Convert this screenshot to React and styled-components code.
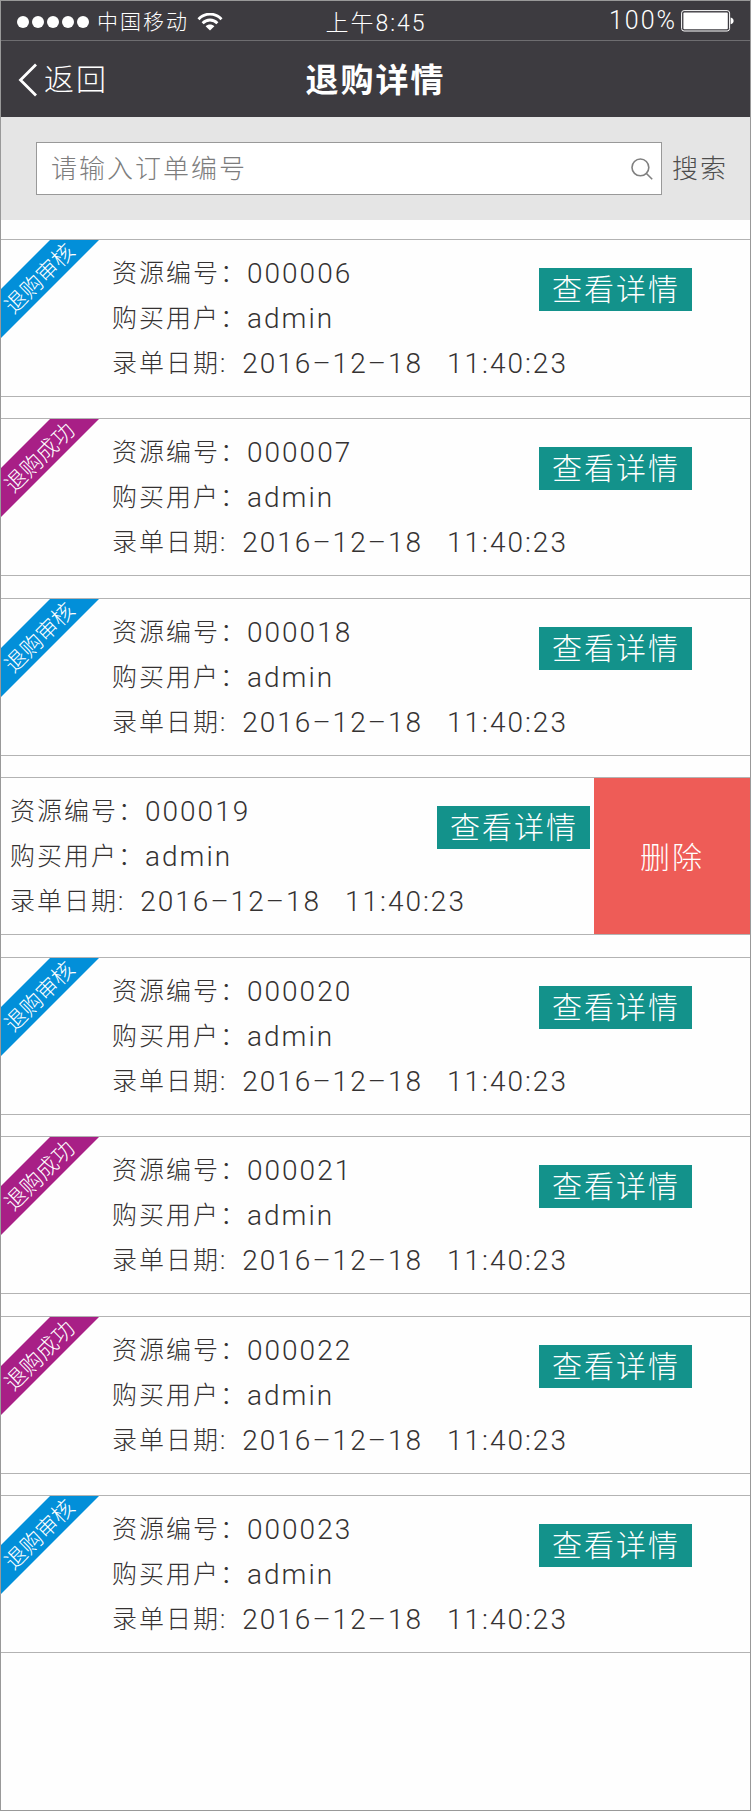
import React from "react";
import styled, { createGlobalStyle } from "styled-components";

const GlobalStyle = createGlobalStyle`
  *, *::before, *::after { box-sizing: border-box; }
  body {
    margin: 0;
    background: #fefefe;
    color: #353232;
    font-family: Roboto, "Noto Sans CJK SC", sans-serif;
    font-weight: 300;
    letter-spacing: 2px;
  }
  button, input { font: inherit; letter-spacing: inherit; }
`;

const Page = styled.div`
  display: flex;
  flex-direction: column;
  min-height: calc(100vh - 1px);
  margin-right: 1px;
  border: 1px solid #999;
`;

const StatusBar = styled.div`
  display: grid;
  grid-template-columns: 1fr auto 1fr;
  align-items: center;
  height: 40px;
  padding: 0 15px 0 16px;
  background: #3d3b40;
  border-bottom: 1px solid #6e6d70;
  color: #fff;
`;

const Carrier = styled.div`
  display: flex;
  align-items: center;
  gap: 8px;
  padding-top: 2px;
  font-size: 21px;
  line-height: 28px;
`;

const Dots = styled.span`
  display: flex;
  gap: 3px;
`;

const Dot = styled.i`
  width: 12px;
  height: 12px;
  border-radius: 50%;
  background: #fff;
`;

const Clock = styled.time`
  padding-top: 6px;
  font-size: 23px;
  line-height: 28px;
`;

const Battery = styled.div`
  display: flex;
  align-items: center;
  justify-content: flex-end;
  gap: 4px;
  font-size: 25px;
  line-height: 28px;
`;

const NavBar = styled.header`
  display: grid;
  grid-template-columns: 1fr auto 1fr;
  align-items: center;
  height: 76px;
  padding: 2px 17px 0;
  background: #3d3b40;
  color: #fff;
`;

const BackButton = styled.button`
  display: flex;
  align-items: center;
  justify-self: start;
  gap: 6px;
  padding: 0;
  border: 0;
  background: none;
  color: inherit;
  font-size: 30px;
  line-height: 40px;
`;

const Title = styled.h1`
  margin: 0;
  padding-top: 1px;
  font-size: 33px;
  font-weight: 700;
  line-height: 44px;
`;

const SearchBar = styled.form`
  display: flex;
  align-items: center;
  height: 103px;
  padding: 0 22px 0 35px;
  background: #e5e5e5;
`;

const SearchField = styled.label`
  display: flex;
  flex: 1;
  align-items: center;
  height: 53px;
  padding: 0 8px 0 14px;
  border: 1px solid #999;
  background: #fff;
`;

const SearchInput = styled.input`
  flex: 1;
  min-width: 0;
  height: 40px;
  padding: 0;
  border: 0;
  outline: 0;
  background: none;
  color: #353232;
  font-size: 26px;
  &::placeholder { color: #7d7d7d; opacity: 1; }
`;

const SearchButton = styled.button`
  margin-left: 10px;
  padding: 0;
  border: 0;
  background: none;
  color: #4d4d4d;
  font-size: 26px;
  line-height: 40px;
`;

const Records = styled.ul`
  margin: 0;
  padding: 19px 0 0;
  list-style: none;
`;

const Record = styled.li`
  position: relative;
  display: flex;
  height: 158px;
  margin-bottom: 21px;
  border: solid #b3b3b3;
  border-width: 1px 0;
  &:nth-child(even) { margin-bottom: 22px; }
`;

const RecordBody = styled.div`
  display: flex;
  flex: 1;
  align-items: flex-start;
  min-width: 0;
  padding: ${(p) => (p.$swiped ? "11px 4px 0 9px" : "11px 58px 0 111px")};
`;

const Ribbon = styled.div`
  position: absolute;
  top: 0;
  left: 0;
  display: flex;
  align-items: center;
  justify-content: center;
  width: 98px;
  height: 98px;
  padding: 0 20px 20px 0;
  background: ${(p) => (p.$done ? "#a81f86" : "#028fd9")};
  clip-path: polygon(49px 0, 98px 0, 0 98px, 0 49px);
  color: #fff;
`;

const RibbonText = styled.span`
  font-size: 22px;
  letter-spacing: 0;
  line-height: 22px;
  white-space: nowrap;
  transform: rotate(-45deg);
`;

const Fields = styled.dl`
  flex: 1;
  min-width: 0;
  margin: 0;
`;

const Field = styled.div`
  display: flex;
  line-height: 45px;
  white-space: nowrap;
`;

const Term = styled.dt`
  font-size: 25px;
`;

const Value = styled.dd`
  display: flex;
  gap: 24px;
  margin: 0 0 0 ${(p) => (p.$spaced ? "15px" : "0")};
  font-size: 28px;
`;

const DetailButton = styled.button`
  flex: none;
  height: 43px;
  margin-top: 17px;
  padding: 0 12px 0 13px;
  border: 0;
  background: #13928b;
  color: #fff;
  font-size: 30px;
  line-height: 43px;
  white-space: nowrap;
`;

const DeleteButton = styled.button`
  flex: none;
  width: 156px;
  padding: 0 0 2px;
  border: 0;
  background: #ee5c57;
  color: #fff;
  font-size: 30px;
`;

const records = [
  { id: "000006" },
  { id: "000007", done: true },
  { id: "000018" },
  { id: "000019", swiped: true },
  { id: "000020" },
  { id: "000021", done: true },
  { id: "000022", done: true },
  { id: "000023" },
];

const WifiIcon = () => (
  <svg width="26" height="18" viewBox="0 0 26 18" fill="none" stroke="#fff" strokeWidth="2.8" aria-hidden="true">
    <path d="M1.5 6.2C8-.6 18-.6 24.5 6.2" />
    <path d="M5.6 10.2c4.2-4.3 10.6-4.3 14.8 0" />
    <path d="M8.6 13.2c2.4-2.4 6.4-2.4 8.8 0L13 17.6z" fill="#fff" stroke="none" />
  </svg>
);

const BatteryIcon = () => (
  <svg width="54" height="22" viewBox="0 0 54 22" aria-hidden="true">
    <rect x="0.6" y="0.6" width="48" height="20.4" rx="2.5" fill="none" stroke="#fff" strokeWidth="1" />
    <rect x="2.4" y="2.4" width="44.4" height="16.8" rx="1" fill="#fff" />
    <path d="M49.6 7.4c4 .8 4 6 0 6.8z" fill="#fff" />
  </svg>
);

const ChevronIcon = () => (
  <svg width="20" height="34" viewBox="0 0 20 34" fill="none" stroke="#fff" strokeWidth="2.8" aria-hidden="true">
    <path d="M18 1.5 2.5 17 18 32.5" />
  </svg>
);

const MagnifierIcon = () => (
  <svg width="22" height="22" viewBox="0 0 22 22" fill="none" stroke="#808080" strokeWidth="1.6" aria-hidden="true">
    <circle cx="9.4" cy="9.4" r="8.4" />
    <path d="m15.2 15.2 6 6" />
  </svg>
);

function RecordCard({ id, done, swiped }) {
  return (
    <Record>
      {!swiped && (
        <Ribbon $done={done}>
          <RibbonText>{done ? "退购成功" : "退购审核"}</RibbonText>
        </Ribbon>
      )}
      <RecordBody $swiped={swiped}>
        <Fields>
          <Field>
            <Term>资源编号：</Term>
            <Value>{id}</Value>
          </Field>
          <Field>
            <Term>购买用户：</Term>
            <Value>admin</Value>
          </Field>
          <Field>
            <Term>录单日期:</Term>
            <Value $spaced>
              <span>2016–12–18</span>
              <span>11:40:23</span>
            </Value>
          </Field>
        </Fields>
        <DetailButton type="button">查看详情</DetailButton>
      </RecordBody>
      {swiped && <DeleteButton type="button">删除</DeleteButton>}
    </Record>
  );
}

export default function App() {
  return (
    <>
      <GlobalStyle />
      <Page>
        <StatusBar>
          <Carrier>
            <Dots>
              <Dot /><Dot /><Dot /><Dot /><Dot />
            </Dots>
            中国移动
            <WifiIcon />
          </Carrier>
          <Clock>上午8:45</Clock>
          <Battery>
            100%
            <BatteryIcon />
          </Battery>
        </StatusBar>
        <NavBar>
          <BackButton type="button">
            <ChevronIcon />
            返回
          </BackButton>
          <Title>退购详情</Title>
        </NavBar>
        <SearchBar onSubmit={(e) => e.preventDefault()}>
          <SearchField>
            <SearchInput type="text" placeholder="请输入订单编号" aria-label="订单编号" />
            <MagnifierIcon />
          </SearchField>
          <SearchButton type="submit">搜索</SearchButton>
        </SearchBar>
        <Records>
          {records.map((r) => (
            <RecordCard key={r.id} {...r} />
          ))}
        </Records>
      </Page>
    </>
  );
}
